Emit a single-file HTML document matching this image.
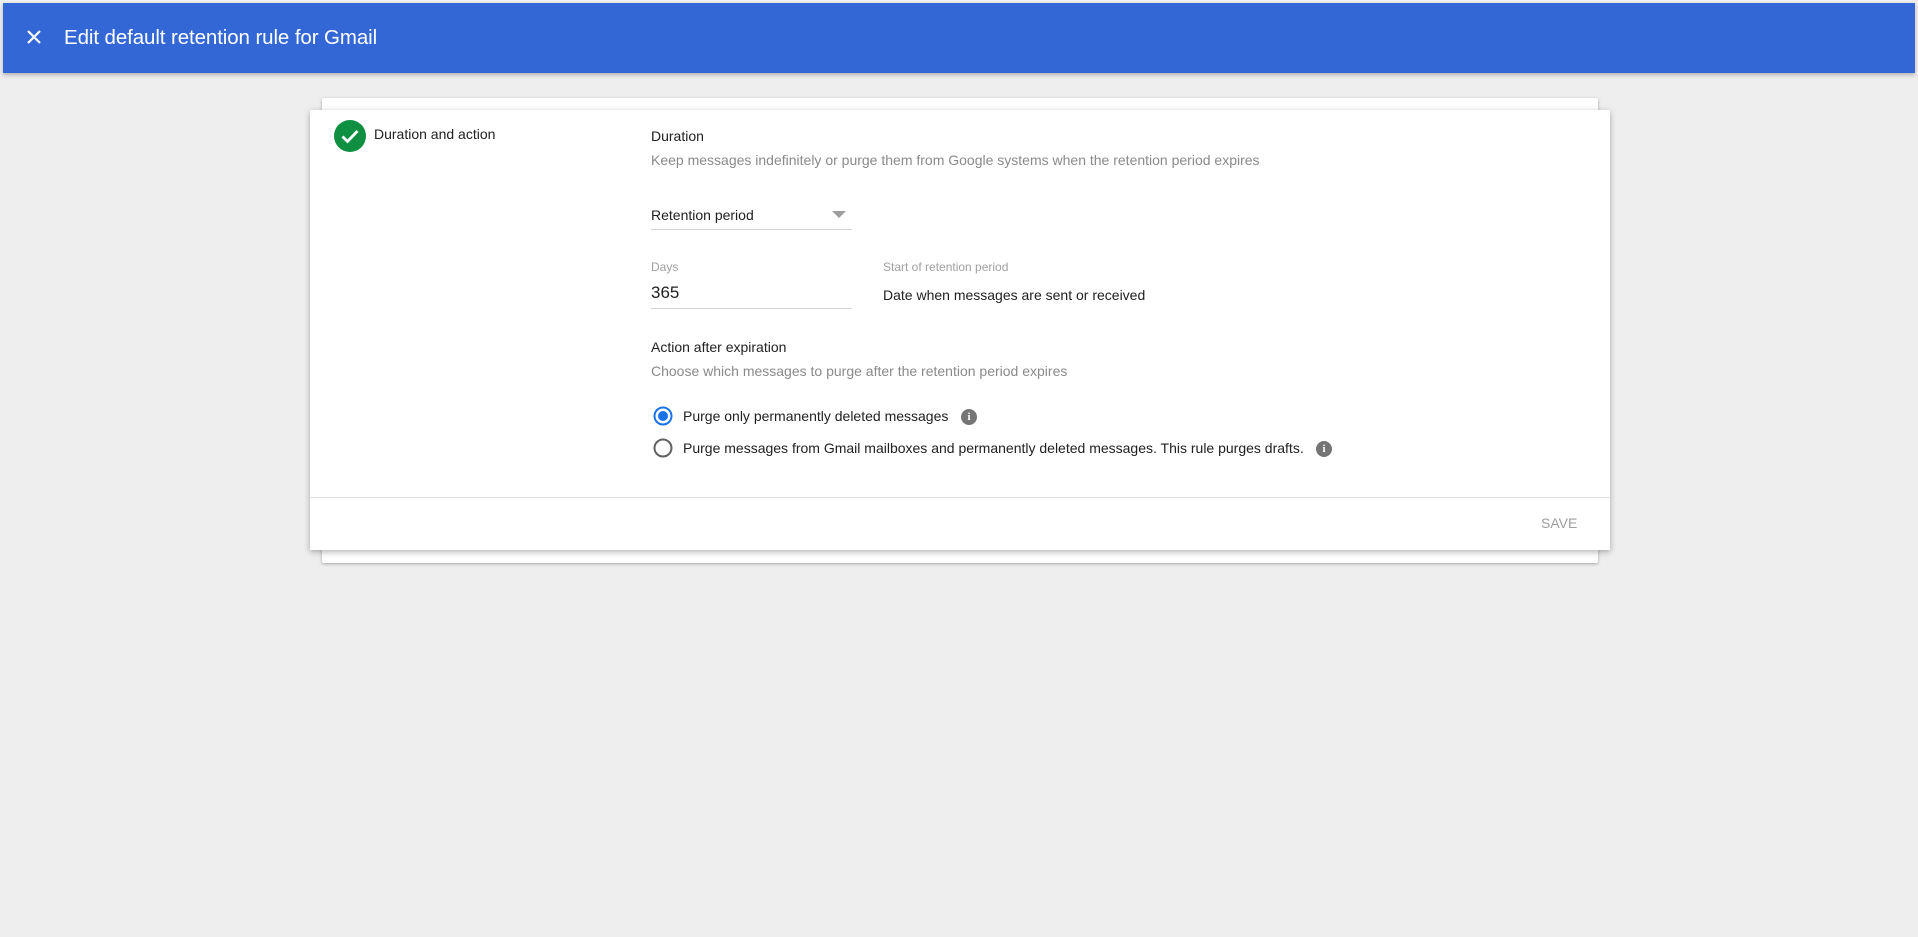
<!DOCTYPE html>
<html><head><meta charset="utf-8"><style>
*{margin:0;padding:0;box-sizing:border-box}
body{width:1918px;height:937px;background:#eeeeee;font-family:"Liberation Sans",Roboto,sans-serif;position:relative;overflow:hidden;color:#212121}
.hdr{position:absolute;left:3px;top:3px;width:1912px;height:70px;background:#3367d6;box-shadow:0 2px 4px rgba(0,0,0,.25)}
.hdr .t{position:absolute;left:61px;top:23px;font-size:20.5px;color:#fff;letter-spacing:-0.1px}
.back{position:absolute;left:322px;top:98px;width:1276px;height:465px;background:#fff;border-radius:2px;box-shadow:0 1px 3px rgba(0,0,0,.3)}
.card{position:absolute;left:310px;top:110px;width:1300px;height:440px;background:#fff;box-shadow:0 2px 6px rgba(0,0,0,.3)}
.a{position:absolute;white-space:nowrap}
.s14{font-size:14px}
.g{color:#8a8a8a}
.ul{position:absolute;height:1px;background:#d6d6d6}
.info{position:absolute;width:16px;height:16px;border-radius:50%;background:#757575;color:#fff;font-size:11px;font-weight:bold;text-align:center;line-height:16px;font-family:"Liberation Serif",serif}
</style></head><body>
<div class="hdr">
<svg style="position:absolute;left:22px;top:25px" width="18" height="18" viewBox="0 0 18 18"><path d="M3 3L15 15M15 3L3 15" stroke="#fff" stroke-width="2.2"/></svg>
<div class="t">Edit default retention rule for Gmail</div>
</div>
<div class="back"></div>
<div class="card">
<svg style="position:absolute;left:24px;top:10px" width="32" height="32" viewBox="0 0 32 32"><circle cx="16" cy="16" r="16" fill="#0f8f42"/><path d="M8.5 16.5l5 5 10-10.5" stroke="#fff" stroke-width="2.8" fill="none"/></svg>
<div class="a s14" style="left:64px;top:16px">Duration and action</div>

<div class="a s14" style="left:341px;top:18px">Duration</div>
<div class="a s14 g" style="left:341px;top:42px">Keep messages indefinitely or purge them from Google systems when the retention period expires</div>

<div class="a s14" style="left:341px;top:97px">Retention period</div>
<svg style="position:absolute;left:522px;top:101px" width="14" height="8"><path d="M0 0h14L7 7z" fill="#9e9e9e"/></svg>
<div class="ul" style="left:341px;top:119px;width:201px"></div>

<div class="a g" style="left:341px;top:150px;font-size:12px;color:#a0a0a0">Days</div>
<div class="a" style="left:341px;top:173px;font-size:17px">365</div>
<div class="ul" style="left:341px;top:198px;width:201px"></div>

<div class="a g" style="left:573px;top:150px;font-size:12px;color:#a0a0a0">Start of retention period</div>
<div class="a s14" style="left:573px;top:177px">Date when messages are sent or received</div>

<div class="a s14" style="left:341px;top:229px">Action after expiration</div>
<div class="a s14 g" style="left:341px;top:253px">Choose which messages to purge after the retention period expires</div>

<svg style="position:absolute;left:343px;top:296px" width="20" height="20"><circle cx="10" cy="10" r="8.5" fill="none" stroke="#1a73e8" stroke-width="2"/><circle cx="10" cy="10" r="5" fill="#1a73e8"/></svg>
<div class="a s14" style="left:373px;top:298px">Purge only permanently deleted messages</div>
<div class="info" style="left:651px;top:299px">i</div>

<svg style="position:absolute;left:343px;top:328px" width="20" height="20"><circle cx="10" cy="10" r="8.5" fill="none" stroke="#616161" stroke-width="2"/></svg>
<div class="a s14" style="left:373px;top:330px">Purge messages from Gmail mailboxes and permanently deleted messages. This rule purges drafts.</div>
<div class="info" style="left:1006px;top:331px">i</div>

<div class="ul" style="left:0;top:387px;width:1300px;background:#e0e0e0"></div>
<div class="a s14" style="left:1231px;top:405px;color:#9e9e9e">SAVE</div>
</div>
</body></html>
